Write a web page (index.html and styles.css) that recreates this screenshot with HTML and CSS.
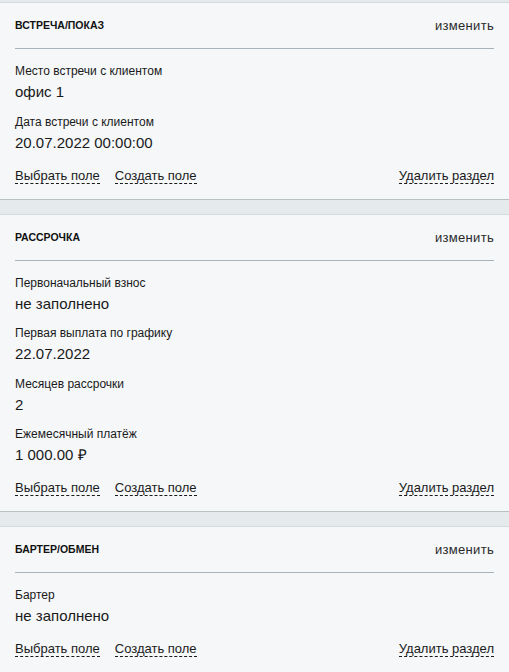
FILE: index.html
```html
<!DOCTYPE html>
<html lang="ru">
<head>
<meta charset="utf-8">
<link rel="stylesheet" href="styles.css">
</head>
<body>
<div class="page">
  <section class="card">
    <div class="card-head">
      <span class="card-title">ВСТРЕЧА/ПОКАЗ</span>
      <span class="card-edit">изменить</span>
    </div>
    <div class="fields">
      <div class="field">
        <div class="field-label">Место встречи с клиентом</div>
        <div class="field-value">офис 1</div>
      </div>
      <div class="field">
        <div class="field-label">Дата встречи с клиентом</div>
        <div class="field-value">20.07.2022 00:00:00</div>
      </div>
    </div>
    <div class="actions">
      <div class="actions-left">
        <span class="dash-link">Выбрать поле</span>
        <span class="dash-link">Создать поле</span>
      </div>
      <span class="dash-link">Удалить раздел</span>
    </div>
  </section>

  <section class="card">
    <div class="card-head">
      <span class="card-title">РАССРОЧКА</span>
      <span class="card-edit">изменить</span>
    </div>
    <div class="fields">
      <div class="field">
        <div class="field-label">Первоначальный взнос</div>
        <div class="field-value">не заполнено</div>
      </div>
      <div class="field">
        <div class="field-label">Первая выплата по графику</div>
        <div class="field-value">22.07.2022</div>
      </div>
      <div class="field">
        <div class="field-label">Месяцев рассрочки</div>
        <div class="field-value">2</div>
      </div>
      <div class="field">
        <div class="field-label">Ежемесячный платёж</div>
        <div class="field-value">1 000.00 ₽</div>
      </div>
    </div>
    <div class="actions">
      <div class="actions-left">
        <span class="dash-link">Выбрать поле</span>
        <span class="dash-link">Создать поле</span>
      </div>
      <span class="dash-link">Удалить раздел</span>
    </div>
  </section>

  <section class="card">
    <div class="card-head">
      <span class="card-title">БАРТЕР/ОБМЕН</span>
      <span class="card-edit">изменить</span>
    </div>
    <div class="fields">
      <div class="field">
        <div class="field-label">Бартер</div>
        <div class="field-value">не заполнено</div>
      </div>
    </div>
    <div class="actions">
      <div class="actions-left">
        <span class="dash-link">Выбрать поле</span>
        <span class="dash-link">Создать поле</span>
      </div>
      <span class="dash-link">Удалить раздел</span>
    </div>
  </section>
</div>
</body>
</html>
```

FILE: styles.css
```css
html, body {
  margin: 0;
  padding: 0;
}
body {
  background: #e5eaed;
  font-family: "Liberation Sans", Arial, sans-serif;
  color: #1f1f1f;
}
.page {
  padding-top: 2px;
  display: flex;
  flex-direction: column;
  gap: 14px;
}
.card {
  background: #f5f7f9;
  border-top: 1px solid #d3dadd;
  border-bottom: 1px solid #b9c0c3;
  padding: 0 15px 15px;
}
.card-head {
  display: flex;
  justify-content: space-between;
  align-items: center;
  padding: 15px 0;
  line-height: 15px;
  border-bottom: 1px solid #a7b3b9;
}
.card-title {
  font-size: 10.5px;
  font-weight: 700;
  color: #111;
}
.card-edit {
  font-size: 13px;
  letter-spacing: 0.3px;
  color: #2a2a2a;
}
.fields {
  display: flex;
  flex-direction: column;
  gap: 13.5px;
  padding-top: 15px;
}
.field {
  display: flex;
  flex-direction: column;
  gap: 5px;
}
.field-label {
  font-size: 12px;
  line-height: 14px;
  color: #1a1a1a;
}
.field-value {
  font-size: 15px;
  line-height: 18px;
  color: #1a1a1a;
}
.actions {
  display: flex;
  justify-content: space-between;
  margin-top: 16px;
}
.actions-left {
  display: flex;
  gap: 15px;
}
.dash-link {
  font-size: 13px;
  line-height: 15px;
  color: #1a1a1a;
  border-bottom: 1px dashed #1a1a1a;
}
```
